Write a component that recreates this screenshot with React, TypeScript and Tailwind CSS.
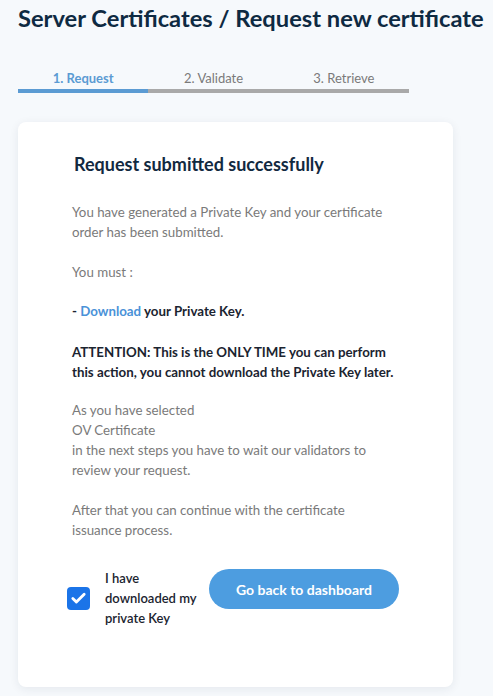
import { Check } from 'lucide-react';

const steps = ['1. Request', '2. Validate', '3. Retrieve'];

const App = () => {
    return (
        <div
            className="min-h-[696px] bg-[#f6f9fc] px-[18px] pt-[4px] pb-[9px]"
            style={{ fontFamily: 'Lato, "Open Sans", sans-serif' }}
        >
            <h1 className="text-[23.7px] leading-[29px] font-bold text-[#0e2a42] whitespace-nowrap">
                Server Certificates / Request new certificate
            </h1>

            <div className="mt-[35px] flex w-[391px]">
                {steps.map((step, i) => (
                    <div key={step} className="flex-1 flex flex-col">
                        <span
                            className={
                                i === 0
                                    ? 'text-center text-[13px] leading-[20px] font-bold text-[#5b9bd3]'
                                    : 'text-center text-[13px] leading-[20px] text-[#7a7a7a]'
                            }
                        >
                            {step}
                        </span>
                        <div
                            className={
                                i === 0
                                    ? 'mt-[1px] h-[4px] bg-[#5b9bd3]'
                                    : 'mt-[1px] h-[4px] bg-[#a9a9a9]'
                            }
                        />
                    </div>
                ))}
            </div>

            <div className="mt-[29px] w-[435px] rounded-lg bg-white shadow-[0_2px_10px_rgba(20,40,70,0.08)] pl-[54px] pr-[30px] pt-[30px] pb-[59px]">
                <h2 className="ml-[2px] text-[18px] leading-[24px] font-bold text-[#12293f]">
                    Request submitted successfully
                </h2>

                <div className="mt-[26px] text-[13.3px] leading-[20px] text-[#7a7a7a]">
                    <p>
                        You have generated a Private Key and your certificate
                        <br />
                        order has been submitted.
                    </p>
                    <p className="mt-[20px]">You must :</p>
                    <p className="mt-[19px] font-bold text-[#1b2430]">
                        - <span className="text-[#4a92d8]">Download</span> your Private Key.
                    </p>
                    <p className="mt-[21px] font-bold text-[#1b2430]">
                        ATTENTION: This is the ONLY TIME you can perform
                        <br />
                        this action, you cannot download the Private Key later.
                    </p>
                    <p className="mt-[18px]">
                        As you have selected
                        <br />
                        OV Certificate
                        <br />
                        in the next steps you have to wait our validators to
                        <br />
                        review your request.
                    </p>
                    <p className="mt-[20px]">
                        After that you can continue with the certificate
                        <br />
                        issuance process.
                    </p>
                </div>

                <div className="mt-[28px] ml-[-5px] flex items-start">
                    <label className="flex items-center gap-[15px]">
                        <span className="mt-[1px] w-[23px] h-[23px] rounded-[4px] bg-[#1b74e8] flex items-center justify-center">
                            <Check size={17} strokeWidth={4} className="text-white" />
                        </span>
                        <span className="w-[100px] text-[13px] leading-[20px] font-semibold text-[#1b2430]">
                            I have downloaded my private Key
                        </span>
                    </label>
                    <button className="ml-[4px] mt-[1px] w-[190px] h-[40px] rounded-full bg-[#4d9de0] text-white text-[14px] font-bold">
                        Go back to dashboard
                    </button>
                </div>
            </div>
        </div>
    );
};

export default App;
